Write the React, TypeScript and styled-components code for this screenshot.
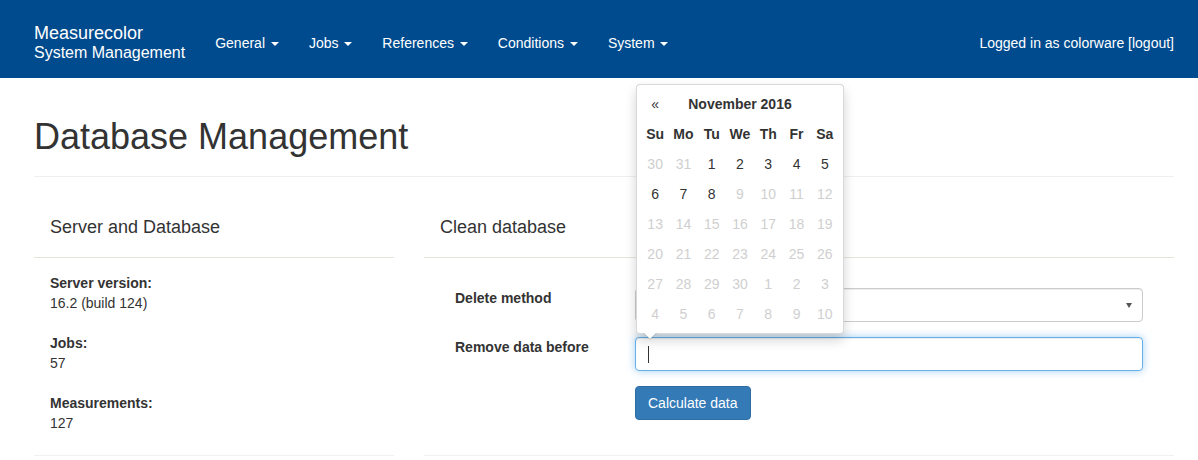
import * as React from "react";
import styled, { createGlobalStyle } from "styled-components";

const GlobalStyle = createGlobalStyle`
  * { box-sizing: border-box; }
  body {
    margin: 0;
    background: #fff;
    font-family: "Liberation Sans", Arial, sans-serif;
    font-size: 14px;
    line-height: 20px;
    color: #333;
  }
`;

const Navbar = styled.nav`
  height: 78px;
  background: #004b8e;
  color: #fff;
  display: flex;
  align-items: center;
  padding: 8px 24px 0 34px;
`;

const Brand = styled.div`
  display: flex;
  flex-direction: column;
  line-height: 20px;
  margin-right: 15px;
`;

const BrandTitle = styled.span`
  font-size: 18px;
`;

const BrandSub = styled.span`
  font-size: 16px;
`;

const NavList = styled.ul`
  display: flex;
  list-style: none;
  margin: 0;
  padding: 0;
`;

const NavItem = styled.li`
  padding: 0 15px;
  font-size: 14px;
  white-space: nowrap;
`;

const Caret = styled.span`
  display: inline-block;
  width: 0;
  height: 0;
  margin-left: 2px;
  vertical-align: middle;
  border-top: 4px solid #fff;
  border-left: 4px solid transparent;
  border-right: 4px solid transparent;
`;

const NavText = styled.div`
  margin-left: auto;
  font-size: 14px;
`;

const Container = styled.main`
  width: 1140px;
  margin-left: 34px;
`;

const PageHeader = styled.h1`
  margin: 39px 0 0;
  font-size: 36px;
  font-weight: 400;
  line-height: 40px;
  padding-bottom: 19px;
  border-bottom: 1px solid #eee;
`;

const Row = styled.div`
  display: grid;
  grid-template-columns: 360px 750px;
  column-gap: 30px;
  margin-top: 20px;
`;

const Panel = styled.section`
  border-bottom: 1px solid #f1f1f1;
`;

const PanelHeading = styled.h3`
  margin: 0;
  padding: 20px 16px 20px;
  font-size: 18px;
  font-weight: 400;
  line-height: 20px;
  border-bottom: 1px solid #e7e4da;
`;

const PanelBody = styled.div<{ $top: number; $bottom: number }>`
  padding: ${(p) => p.$top}px 16px ${(p) => p.$bottom}px;
`;

const InfoList = styled.dl`
  margin: 0 0 20px;
`;

const InfoTerm = styled.dt`
  font-weight: 700;
`;

const InfoValue = styled.dd`
  margin: 0;
`;

const FormGroup = styled.div`
  display: grid;
  grid-template-columns: 180px 1fr;
  margin-bottom: 15px;
`;

const Label = styled.label`
  padding: 0 15px;
  font-weight: 700;
`;

const Field = styled.div`
  position: relative;
  padding: 0 15px;
`;

const Select = styled.div`
  position: relative;
  height: 34px;
  border: 1px solid #ccc;
  border-radius: 4px;
  box-shadow: inset 0 1px 1px rgba(0, 0, 0, 0.075);
  background: #fff;
`;

const SelectArrow = styled.span`
  position: absolute;
  right: 10px;
  top: 14px;
  border-top: 5px solid #555;
  border-left: 3px solid transparent;
  border-right: 3px solid transparent;
`;

const Input = styled.div`
  position: relative;
  height: 34px;
  border: 1px solid #66afe9;
  border-radius: 4px;
  background: #fff;
  box-shadow: inset 0 1px 1px rgba(0, 0, 0, 0.075),
    0 0 8px rgba(102, 175, 233, 0.6);
`;

const TextCursor = styled.span`
  position: absolute;
  left: 12px;
  top: 8px;
  width: 1px;
  height: 17px;
  background: #333;
`;

const Button = styled.button`
  height: 34px;
  padding: 6px 12px;
  font-family: inherit;
  font-size: 14px;
  line-height: 20px;
  color: #fff;
  background: #337ab7;
  border: 1px solid #2e6da4;
  border-radius: 4px;
`;

const Datepicker = styled.div`
  position: absolute;
  left: 16px;
  bottom: calc(100% + 3px);
  width: 208px;
  padding: 4px;
  background: #fff;
  border: 1px solid rgba(0, 0, 0, 0.15);
  border-radius: 4px;
  box-shadow: 0 6px 12px rgba(0, 0, 0, 0.175);
  z-index: 10;

  &::before {
    content: "";
    position: absolute;
    bottom: -7px;
    left: 6px;
    border-top: 7px solid rgba(0, 0, 0, 0.15);
    border-left: 7px solid transparent;
    border-right: 7px solid transparent;
  }
  &::after {
    content: "";
    position: absolute;
    bottom: -6px;
    left: 7px;
    border-top: 6px solid #fff;
    border-left: 6px solid transparent;
    border-right: 6px solid transparent;
  }
`;

const CalTable = styled.table`
  width: 100%;
  border-collapse: collapse;
  table-layout: fixed;
`;

const CalHead = styled.th`
  height: 30px;
  padding: 0;
  text-align: center;
  font-weight: 700;
`;

const CalCell = styled.td<{ $muted: boolean }>`
  height: 30px;
  padding: 0;
  text-align: center;
  color: ${(p) => (p.$muted ? "#cfcfcf" : "#333")};
`;

const weekdays = ["Su", "Mo", "Tu", "We", "Th", "Fr", "Sa"];

const weeks: number[][] = [
  [30, 31, 1, 2, 3, 4, 5],
  [6, 7, 8, 9, 10, 11, 12],
  [13, 14, 15, 16, 17, 18, 19],
  [20, 21, 22, 23, 24, 25, 26],
  [27, 28, 29, 30, 1, 2, 3],
  [4, 5, 6, 7, 8, 9, 10],
];

// only 1-8 November are selectable
const isActive = (w: number, d: number) =>
  (w === 0 && d >= 2) || (w === 1 && d <= 2);

const info = [
  { term: "Server version:", value: "16.2 (build 124)" },
  { term: "Jobs:", value: "57" },
  { term: "Measurements:", value: "127" },
];

const App: React.FunctionComponent = () => {
  return (
    <>
      <GlobalStyle />
      <Navbar>
        <Brand>
          <BrandTitle>Measurecolor</BrandTitle>
          <BrandSub>System Management</BrandSub>
        </Brand>
        <NavList>
          {["General", "Jobs", "References", "Conditions", "System"].map(
            (item) => (
              <NavItem key={item}>
                {item} <Caret />
              </NavItem>
            )
          )}
        </NavList>
        <NavText>Logged in as colorware [logout]</NavText>
      </Navbar>

      <Container>
        <PageHeader>Database Management</PageHeader>
        <Row>
          <Panel>
            <PanelHeading>Server and Database</PanelHeading>
            <PanelBody $top={15} $bottom={0}>
              {info.map((i) => (
                <InfoList key={i.term}>
                  <InfoTerm>{i.term}</InfoTerm>
                  <InfoValue>{i.value}</InfoValue>
                </InfoList>
              ))}
            </PanelBody>
          </Panel>

          <Panel>
            <PanelHeading>Clean database</PanelHeading>
            <PanelBody $top={30} $bottom={20}>
              <FormGroup>
                <Label>Delete method</Label>
                <Field>
                  <Select>
                    <SelectArrow />
                  </Select>
                </Field>
              </FormGroup>
              <FormGroup>
                <Label>Remove data before</Label>
                <Field>
                  <Input>
                    <TextCursor />
                  </Input>
                  <Datepicker>
                    <CalTable>
                      <thead>
                        <tr>
                          <CalHead style={{ fontWeight: 400 }}>«</CalHead>
                          <CalHead colSpan={5}>November 2016</CalHead>
                          <CalHead />
                        </tr>
                        <tr>
                          {weekdays.map((d) => (
                            <CalHead key={d}>{d}</CalHead>
                          ))}
                        </tr>
                      </thead>
                      <tbody>
                        {weeks.map((week, w) => (
                          <tr key={w}>
                            {week.map((day, d) => (
                              <CalCell key={d} $muted={!isActive(w, d)}>
                                {day}
                              </CalCell>
                            ))}
                          </tr>
                        ))}
                      </tbody>
                    </CalTable>
                  </Datepicker>
                </Field>
              </FormGroup>
              <FormGroup>
                <span />
                <Field>
                  <Button>Calculate data</Button>
                </Field>
              </FormGroup>
            </PanelBody>
          </Panel>
        </Row>
      </Container>
    </>
  );
};

export default App;
